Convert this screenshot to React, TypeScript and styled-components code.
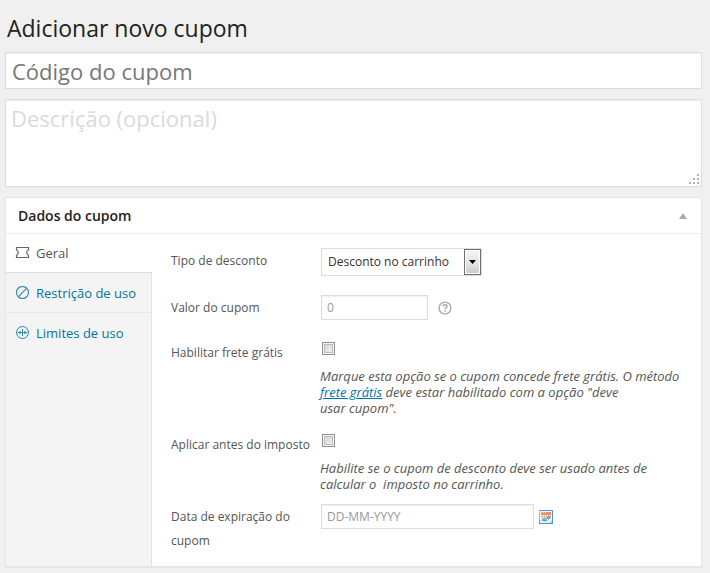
import React from "react";
import styled, { createGlobalStyle, css } from "styled-components";

const GlobalStyle = createGlobalStyle`
  *, *::before, *::after { box-sizing: border-box; }
  body {
    margin: 0;
    background: #f0f0f0;
    color: #555;
    font-family: "Open Sans", "Noto Sans", sans-serif;
    font-size: 12px;
  }
  input, textarea, select, button { font-family: inherit; margin: 0; }
`;

const Page = styled.main`
  padding: 12px 8px 6px 5px;
`;

const Title = styled.h1`
  margin: 0 0 8px;
  padding-left: 2px;
  color: #222;
  font-size: 23px;
  font-weight: 400;
  line-height: 32px;
`;

const fieldFrame = css`
  border: 1px solid #ddd;
  border-radius: 0;
  background: #fff;
  box-shadow: inset 0 1px 2px rgba(0, 0, 0, 0.07);
  color: #333;
  outline: none;
`;

const CodeInput = styled.input`
  ${fieldFrame}
  display: block;
  width: 100%;
  height: 37px;
  padding: 0 6px;
  font-size: 22px;
  &::placeholder { color: #777; opacity: 1; }
`;

const DescriptionBox = styled.div`
  position: relative;
  margin: 10px 0;
`;

const DescriptionInput = styled.textarea`
  ${fieldFrame}
  display: block;
  width: 100%;
  height: 88px;
  padding: 3px 5px;
  font-size: 22px;
  line-height: 30px;
  resize: none;
  &::placeholder { color: #dadada; opacity: 1; }
`;

const Grip = styled.svg`
  position: absolute;
  right: 1px;
  bottom: 1px;
  pointer-events: none;
`;

const Panel = styled.section`
  border: 1px solid #e5e5e5;
  background: #fff;
  box-shadow: 0 1px 1px rgba(0, 0, 0, 0.04);
`;

const PanelHeader = styled.header`
  display: flex;
  align-items: center;
  justify-content: space-between;
  height: 36px;
  padding: 0 14px 0 12px;
  border-bottom: 1px solid #eee;
`;

const PanelTitle = styled.h2`
  margin: 0;
  color: #222;
  font-size: 14px;
  font-weight: 600;
  line-height: 20px;
`;

const ToggleButton = styled.button`
  display: flex;
  padding: 0;
  border: 0;
  background: none;
`;

const PanelBody = styled.div`
  display: grid;
  grid-template-columns: 146px 1fr;
`;

const Tabs = styled.nav`
  background: linear-gradient(to left, #e2e2e2 1px, #f4f4f4 1px);
`;

const Tab = styled.a<{ $active?: boolean }>`
  display: flex;
  align-items: center;
  gap: 6px;
  height: ${(p) => (p.$active ? 39 : 40)}px;
  margin-right: ${(p) => (p.$active ? 0 : 1)}px;
  padding-left: 9px;
  border-bottom: 1px solid ${(p) => (p.$active ? "#ddd" : "#e8e8e8")};
  background: ${(p) => (p.$active ? "#fff" : "transparent")};
  color: ${(p) => (p.$active ? "#555" : "#0074a2")};
  font-size: 13px;
  line-height: 20px;
  text-decoration: none;
  &:last-child { border-bottom: 0; }
`;

const Form = styled.form`
  padding: 14px 16px 13px 19px;
`;

const Row = styled.div<{ $after?: number }>`
  display: grid;
  grid-template-columns: 140px 1fr;
  column-gap: 10px;
  align-items: start;
  margin-bottom: ${(p) => p.$after ?? 0}px;
`;

const Label = styled.label`
  padding-top: 1px;
  line-height: 24px;
`;

const Control = styled.div`
  display: flex;
  align-items: center;
  gap: 5px;
`;

const SelectBox = styled.div`
  position: relative;
  display: flex;
`;

const Select = styled.select`
  ${fieldFrame}
  width: 161px;
  height: 28px;
  padding: 0 18px 2px 6px;
  appearance: none;
  box-shadow: none;
  font-size: 12px;
`;

const SelectArrow = styled.svg`
  position: absolute;
  top: 1px;
  right: 1px;
  pointer-events: none;
`;

const TextInput = styled.input<{ $width: number }>`
  ${fieldFrame}
  width: ${(p) => p.$width}px;
  height: 25px;
  padding: 0 5px;
  font-size: 12px;
  &::placeholder { color: #999; opacity: 1; }
`;

const Help = styled.button`
  display: flex;
  margin-left: 5px;
  padding: 0;
  border: 0;
  background: none;
`;

const CheckField = styled.div`
  padding: 2px 0 0 1px;
`;

const Checkbox = styled.input`
  display: block;
  width: 13px;
  height: 13px;
  appearance: none;
  border: 1px solid #8e8f8f;
  background: linear-gradient(135deg, #cbcfd5, #f6f6f6);
  box-shadow: inset 0 0 0 1px #f4f4f4, inset 0 0 0 2px #b9bdc2;
`;

const Hint = styled.p`
  margin: 13px 0 0 -2px;
  font-size: 13px;
  font-style: italic;
  line-height: 16px;
`;

const Link = styled.a`
  color: #0074a2;
  text-decoration: underline;
`;

const CalendarButton = styled.button`
  display: flex;
  padding: 0;
  border: 0;
  background: none;
`;

const TicketIcon = () => (
  <svg width="15" height="14" viewBox="0 0 15 14" fill="none" stroke="#666" strokeWidth="1.2">
    <path d="M1.5 1.5h12v2.300c-1.300.7-1.800 1.600-1.800 2.700s.5 2 1.800 2.700v2.300h-12V9.200c1.300-.7 1.800-1.600 1.800-2.700S2.800 4.500 1.500 3.800z" />
  </svg>
);

const ForbidIcon = () => (
  <svg width="15" height="14" viewBox="0 0 15 14" fill="none" stroke="#2a86ad" strokeWidth="1.1">
    <circle cx="7.5" cy="6.5" r="6" />
    <path d="M3.5 10.7 11.5 2.3" />
  </svg>
);

const LimitIcon = () => (
  <svg width="15" height="14" viewBox="0 0 15 14" fill="none" stroke="#2a86ad">
    <circle cx="7.5" cy="6.5" r="6" />
    <path d="M7.5 3v7M2.5 6.5h4M8.5 6.5h4" />
    <path d="M4.6 4.5 6.7 6.5 4.6 8.5zM10.4 4.5 8.3 6.5l2.1 2z" fill="#2a86ad" stroke="none" />
  </svg>
);

const HelpIcon = () => (
  <svg width="14" height="14" viewBox="0 0 14 14" fill="none" stroke="#aaa" strokeWidth="1.4">
    <circle cx="7" cy="7" r="5.9" />
    <path d="M5 5.6C5 4.3 5.9 3.7 7 3.7s2 .7 2 1.7c0 1.300-1.900 1.400-1.900 2.800" strokeWidth="1.5" />
    <path d="M7.1 9.2v1.500" strokeWidth="1.5" />
  </svg>
);

const cellColumns = [2, 4, 6, 8, 10];
const cellRows = [5, 7, 9, 11];
const greens = [[8, 7], [9, 6], [10, 7], [9, 8], [4, 9], [5, 10], [6, 9], [5, 8], [4, 10], [6, 10], [8, 8], [10, 6]];

const CalendarIcon = () => (
  <svg width="14" height="14" viewBox="0 0 14 14" shapeRendering="crispEdges">
    <rect width="14" height="14" fill="#5b8fd4" />
    <rect width="1" height="10" fill="#8fb6ea" />
    <rect x="1" y="1" width="12" height="12" fill="#f3f7fd" />
    <rect x="2" y="5" width="10" height="7" fill="#b3c4dc" />
    {cellRows.flatMap((y) =>
      cellColumns.map((x) => <rect key={`${x}-${y}`} x={x} y={y} width="1" height="1" fill="#fff" />)
    )}
    <rect x="2" y="2" width="10" height="3" fill="#fb8a4b" />
    <rect x="2" y="2" width="5" height="1" fill="#fdb07c" />
    {greens.map(([x, y]) => (
      <rect key={`${x}-${y}`} x={x} y={y} width="1" height="1" fill="#5aa64c" />
    ))}
    <path d="M9 13v-3h1V9h3v4z" fill="#f3f7fd" />
    <path d="M10 13v-1h1v-1h1v-1h1v3z" fill="#c3d7f0" />
  </svg>
);

export default function App() {
  return (
    <>
      <GlobalStyle />
      <Page>
        <Title>Adicionar novo cupom</Title>
        <CodeInput type="text" aria-label="Código do cupom" placeholder="Código do cupom" />
        <DescriptionBox>
          <DescriptionInput aria-label="Descrição" placeholder="Descrição (opcional)" />
          <Grip width="12" height="12" viewBox="0 0 12 12" fill="#b0b0b0" shapeRendering="crispEdges">
            <path d="M8 0h2v2H8zM4 4h2v2H4zM8 4h2v2H8zM0 8h2v2H0zM4 8h2v2H4zM8 8h2v2H8z" />
          </Grip>
        </DescriptionBox>
        <Panel>
          <PanelHeader>
            <PanelTitle>Dados do cupom</PanelTitle>
            <ToggleButton type="button" aria-label="Alternar painel">
              <svg width="8" height="6" viewBox="0 0 8 6" fill="#aaa">
                <path d="M4 0 8 6H0z" />
              </svg>
            </ToggleButton>
          </PanelHeader>
          <PanelBody>
            <Tabs>
              <Tab href="#geral" $active><TicketIcon />Geral</Tab>
              <Tab href="#restricao"><ForbidIcon />Restrição de uso</Tab>
              <Tab href="#limites"><LimitIcon />Limites de uso</Tab>
            </Tabs>
            <Form>
              <Row $after={19}>
                <Label htmlFor="tipo">Tipo de desconto</Label>
                <Control>
                  <SelectBox>
                    <Select id="tipo"><option>Desconto no carrinho</option></Select>
                    <SelectArrow width="17" height="26" viewBox="0 0 17 26">
                      <defs>
                        <linearGradient id="arrowFace" x1="0" y1="0" x2="0" y2="1">
                          <stop offset="0" stopColor="#f2f2f2" />
                          <stop offset="0.5" stopColor="#e8e8e8" />
                          <stop offset="1" stopColor="#cdcdcd" />
                        </linearGradient>
                      </defs>
                      <rect x="0.5" y="0.5" width="16" height="25" fill="#fff" stroke="#707070" />
                      <rect x="2" y="2" width="13" height="22" fill="url(#arrowFace)" />
                      <path d="M5 11h7l-3.5 4z" fill="#000" />
                    </SelectArrow>
                  </SelectBox>
                </Control>
              </Row>
              <Row $after={20}>
                <Label htmlFor="valor">Valor do cupom</Label>
                <Control>
                  <TextInput id="valor" type="text" placeholder="0" $width={107} />
                  <Help type="button" aria-label="Ajuda"><HelpIcon /></Help>
                </Control>
              </Row>
              <Row $after={16}>
                <Label htmlFor="frete">Habilitar frete grátis</Label>
                <CheckField>
                  <Checkbox id="frete" type="checkbox" />
                  <Hint>
                    Marque esta opção se o cupom concede frete grátis. O método<br />
                    <Link href="#frete-gratis">frete grátis</Link> deve estar habilitado com a opção "deve<br />
                    usar cupom".
                  </Hint>
                </CheckField>
              </Row>
              <Row $after={12}>
                <Label htmlFor="imposto">Aplicar antes do imposto</Label>
                <CheckField>
                  <Checkbox id="imposto" type="checkbox" />
                  <Hint>
                    Habilite se o cupom de desconto deve ser usado antes de<br />
                    calcular o&nbsp; imposto no carrinho.
                  </Hint>
                </CheckField>
              </Row>
              <Row>
                <Label htmlFor="data">Data de expiração do cupom</Label>
                <Control>
                  <TextInput id="data" type="text" placeholder="DD-MM-YYYY" $width={213} />
                  <CalendarButton type="button" aria-label="Abrir calendário"><CalendarIcon /></CalendarButton>
                </Control>
              </Row>
            </Form>
          </PanelBody>
        </Panel>
      </Page>
    </>
  );
}
